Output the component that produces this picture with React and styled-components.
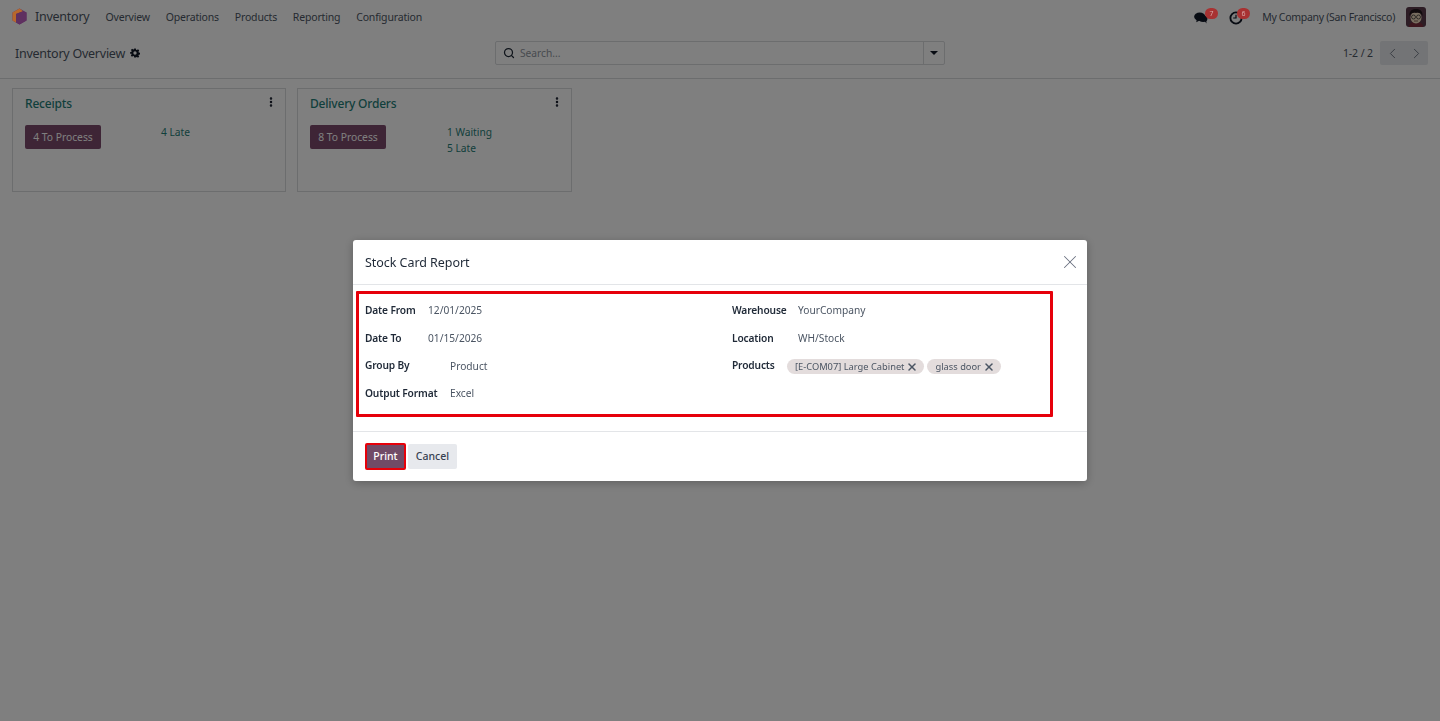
import React from "react";
import styled, { createGlobalStyle } from "styled-components";
import { Search, ChevronLeft, ChevronRight, X, EllipsisVertical } from "lucide-react";

const Global = createGlobalStyle`
  html, body { margin: 0; padding: 0; height: 100%; background: #fff; }
  body { font-family: "Noto Sans", "Open Sans", sans-serif; font-size: 12px; color: #4b5563; overflow: hidden; }
  * { box-sizing: border-box; }
`;

const Page = styled.div`
  width: 1440px;
  height: 721px;
  display: flex;
  flex-direction: column;
  background: #fff;
`;

const NavBar = styled.header`
  height: 35px;
  display: flex;
  align-items: center;
  padding: 0 14px 2px 12px;
`;

const LogoBox = styled.svg`
  position: relative;
  z-index: 1;
  width: 15px;
  height: 17px;
  margin-right: 8px;
  flex: none;
`;

const AppName = styled.span`
  font-size: 12.5px;
  letter-spacing: -0.25px;
  color: #4b5563;
  margin-right: 16px;
`;

const NavItem = styled.span`
  font-size: 10.5px;
  letter-spacing: -0.17px;
  color: #4b5563;
  margin-right: 15.8px;
`;

const NavRight = styled.div`
  margin-left: auto;
  display: flex;
  align-items: center;
`;

const IconWrap = styled.span`
  position: relative;
  display: inline-flex;
  width: 16px;
  height: 16px;
  margin-top: 2px;
  align-items: center;
  justify-content: center;
  margin-right: ${(p) => p.$gap}px;
`;

const Badge = styled.span`
  position: absolute;
  z-index: 1;
  top: -1.5px;
  left: ${(p) => p.$left}px;
  width: 12.5px;
  height: 11px;
  border-radius: 6px;
  background: #a83232;
  color: #d8a8a8;
  font-size: 7px;
  line-height: 11px;
  text-align: center;
`;

const CompanyName = styled.span`
  font-size: 10.5px;
  letter-spacing: -0.3px;
  color: #4b5563;
  margin-right: 11px;
`;

const Avatar = styled.svg`
  width: 20px;
  height: 20px;
  border-radius: 3px;
  flex: none;
`;

const ControlPanel = styled.div`
  height: 44px;
  display: grid;
  grid-template-columns: 480px 450px 1fr;
  align-items: center;
  padding: 0 12px 7px 15px;
  border-bottom: 1px solid #d8dadd;
`;

const TitleRow = styled.div`
  display: flex;
  align-items: center;
  gap: 5px;
`;

const PageTitle = styled.span`
  font-size: 12.5px;
  letter-spacing: -0.25px;
  color: #4b5563;
`;

const SearchBar = styled.div`
  height: 24px;
  display: flex;
  align-items: center;
  border: 1px solid #d8dadd;
  border-radius: 2px;
`;

const SearchField = styled.div`
  flex: 1;
  display: flex;
  align-items: center;
  gap: 5px;
  padding-left: 7px;
  height: 100%;
  font-size: 10.2px;
  color: #8f959e;
`;

const SearchCaret = styled.div`
  width: 21px;
  height: 100%;
  border-left: 1px solid #d8dadd;
  display: flex;
  align-items: center;
  justify-content: center;
`;

const Caret = styled.span`
  width: 0;
  height: 0;
  border-left: 4px solid transparent;
  border-right: 4px solid transparent;
  border-top: 4px solid #111827;
`;

const Pager = styled.div`
  display: flex;
  align-items: center;
  justify-content: flex-end;
  gap: 7px;
  font-size: 10.5px;
  letter-spacing: -0.1px;
`;

const PagerButtons = styled.div`
  width: 48px;
  height: 24px;
  background: #e7e9ed;
  border-radius: 2px;
  display: flex;
  align-items: center;
  justify-content: space-around;
  color: #6b7280;
`;

const Dashboard = styled.main`
  display: flex;
  gap: 11px;
  padding: 9px 12px;
`;

const Card = styled.section`
  width: ${(p) => p.$w}px;
  height: 104px;
  border: 1px solid #d8dadd;
  padding: 6px 12px;
  display: flex;
  flex-direction: column;
`;

const CardHead = styled.div`
  display: flex;
  justify-content: space-between;
  align-items: flex-start;
  height: 30px;
`;

const CardTitle = styled.span`
  font-size: 12px;
  letter-spacing: -0.2px;
  font-weight: 500;
  color: #1f8078;
  line-height: 18px;
`;

const CardMore = styled.span`
  margin-right: -4px;
  margin-top: 1px;
  color: #111827;
  display: inline-flex;
`;

const CardBody = styled.div`
  display: flex;
  align-items: flex-start;
`;

const ProcessButton = styled.div`
  width: 76px;
  height: 24px;
  background: #7c4a6c;
  color: #fff;
  font-size: 10.3px;
  line-height: 24px;
  text-align: center;
  border-radius: 2px;
`;

const CardStats = styled.div`
  margin-left: ${(p) => p.$left}px;
  margin-top: -1px;
  display: flex;
  flex-direction: column;
  font-size: 10.2px;
  line-height: 16px;
  color: #1f8078;
`;

const Backdrop = styled.div`
  position: fixed;
  inset: 0;
  background: rgba(0, 0, 0, 0.5);
  padding-top: 240px;
  display: flex;
  justify-content: center;
  align-items: flex-start;
`;

const Modal = styled.div`
  position: relative;
  z-index: 2;
  width: 734px;
  height: 241px;
  background: #fff;
  border-radius: 3px;
  box-shadow: 0 2px 10px rgba(0, 0, 0, 0.25);
  display: flex;
  flex-direction: column;
`;

const ModalHead = styled.div`
  height: 45px;
  padding: 0 6px 0 12px;
  border-bottom: 1px solid #e3e5e8;
  display: flex;
  align-items: center;
  justify-content: space-between;
`;

const ModalTitle = styled.span`
  font-size: 12.5px;
  letter-spacing: -0.05px;
  color: #1f2937;
`;

const CloseIcon = styled.span`
  display: inline-flex;
  color: #6b7280;
`;

const ModalBody = styled.div`
  flex: 1;
  padding: 6px 0 0 3px;
  border-bottom: 1px solid #e3e5e8;
`;

const Highlight = styled.div`
  width: 697px;
  height: 126px;
  border: 3px solid #e6000a;
  border-radius: 1px;
  padding: 2px 6px 0;
  display: flex;
`;

const FormColumn = styled.div`
  width: ${(p) => p.$w}px;
  display: flex;
  flex-direction: column;
`;

const FormRow = styled.div`
  height: 27.7px;
  display: flex;
  align-items: center;
`;

const FieldLabel = styled.span`
  width: ${(p) => p.$w}px;
  flex: none;
  font-size: 10.2px;
  letter-spacing: -0.15px;
  font-weight: 600;
  color: #1f2937;
`;

const FieldValue = styled.span`
  font-size: 10.2px;
  color: #4b5563;
  padding-top: 1px;
`;

const Tags = styled.div`
  display: flex;
  gap: 3px;
  margin-top: 3px;
`;

const Tag = styled.span`
  display: inline-flex;
  align-items: center;
  gap: 2px;
  height: 15px;
  padding: 0 6px 0 8px;
  border-radius: 8px;
  background: #e3dcdc;
  font-size: 9.3px;
  color: #4b5563;
`;

const ModalFoot = styled.div`
  height: 49px;
  display: flex;
  align-items: center;
  padding: 0 0 0 12px;
  gap: 2px;
`;

const PrintButton = styled.div`
  width: 41px;
  height: 27px;
  background: #714b67;
  border: 2px solid #e6000a;
  border-radius: 2px;
  color: #fff;
  font-size: 10.5px;
  font-weight: 500;
  padding-bottom: 1px;
  display: flex;
  align-items: center;
  justify-content: center;
`;

const CancelButton = styled.div`
  width: 49px;
  height: 25px;
  background: #e7e9ed;
  border-radius: 2px;
  color: #374151;
  font-size: 10.5px;
  font-weight: 500;
  padding-bottom: 1px;
  display: flex;
  align-items: center;
  justify-content: center;
`;

const Logo = () => (
  <LogoBox viewBox="0 0 15 17">
    <path d="M7.5 0.5 L14.5 4.5 V12.5 L7.5 16.5 L0.5 12.5 V4.5 Z" fill="#5f3060" />
    <path d="M7.5 0.5 L0.5 4.5 V12.5 L4 14.500 V6 L11 3.300 Z" fill="#b8682c" />
    <path d="M4 6 L11 3.300 L14.5 4.5 V12.5 L7.5 16.5 L4 14.500 Z" fill="#5f3060" />
  </LogoBox>
);

const Gear = () => (
  <svg width="10" height="10" viewBox="0 0 24 24" fill="#111827">
    <path d="M10 1h4l.6 3.2 2 .8 2.7-1.8 2.8 2.8-1.8 2.7.8 2 3.2.6v4l-3.2.6-.8 2 1.800 2.700-2.800 2.800-2.700-1.800-2 .8L14 23h-4l-.6-3.200-2-.8-2.700 1.800-2.800-2.800 1.800-2.700-.8-2L0 14v-4l3.200-.6.8-2L2.200 4.700 5 1.900l2.700 1.800 2-.8Z M12 8a4 4 0 1 0 0 8 4 4 0 0 0 0-8Z" fillRule="evenodd" />
  </svg>
);

const Chat = () => (
  <svg width="14" height="12" viewBox="0 0 16 14" fill="#111827">
    <ellipse cx="6.500" cy="5.500" rx="6.500" ry="4.800" />
    <path d="M3 8.500 L2.500 12 L7 9.500Z" />
    <ellipse cx="10.500" cy="8" rx="5" ry="3.800" />
    <path d="M12 10.500 L14.500 13.500 L14 9.500Z" />
  </svg>
);

const Clock = () => (
  <svg width="14" height="14" viewBox="0 0 15 15" fill="none" stroke="#111827">
    <circle cx="7.500" cy="7.500" r="6" strokeWidth="2" />
    <path d="M7.500 4 V7.500 H4.500" strokeWidth="1.300" />
  </svg>
);

const AvatarArt = () => (
  <Avatar viewBox="0 0 20 20">
    <rect width="20" height="20" fill="#5a3a4a" />
    <path d="M3 20 C3 16 6 15 10 15 S17 16 17 20Z" fill="#7c2d3c" />
    <ellipse cx="10" cy="10.500" rx="5.500" ry="6" fill="#f0dcc0" />
    <path d="M3.500 9 C3 3 7 2 10 2 S17 3 16.500 9 C15 6 13 5.500 10 6 C7 5.500 5 6 3.500 9Z" fill="#20161a" />
    <circle cx="7.500" cy="10" r="2" fill="none" stroke="#222" strokeWidth="0.700" />
    <circle cx="12.500" cy="10" r="2" fill="none" stroke="#222" strokeWidth="0.700" />
    <path d="M8 14 H12" stroke="#6d4c41" strokeWidth="0.800" />
  </Avatar>
);

export default function App() {
  return (
    <>
      <Global />
      <Page>
        <NavBar>
          <Logo />
          <AppName>Inventory</AppName>
          <NavItem>Overview</NavItem>
          <NavItem>Operations</NavItem>
          <NavItem>Products</NavItem>
          <NavItem>Reporting</NavItem>
          <NavItem>Configuration</NavItem>
          <NavRight>
            <IconWrap $gap={18.5}>
              <Chat />
              <Badge $left={12}>7</Badge>
            </IconWrap>
            <IconWrap $gap={18.5}>
              <Clock />
              <Badge $left={9.5}>6</Badge>
            </IconWrap>
            <CompanyName>My Company (San Francisco)</CompanyName>
            <AvatarArt />
          </NavRight>
        </NavBar>
        <ControlPanel>
          <TitleRow>
            <PageTitle>Inventory Overview</PageTitle>
            <Gear />
          </TitleRow>
          <SearchBar>
            <SearchField>
              <Search size={12} color="#1f2937" strokeWidth={2.500} />
              Search...
            </SearchField>
            <SearchCaret>
              <Caret />
            </SearchCaret>
          </SearchBar>
          <Pager>
            1-2 / 2
            <PagerButtons>
              <ChevronLeft size={17} strokeWidth={1.300} />
              <ChevronRight size={17} strokeWidth={1.300} />
            </PagerButtons>
          </Pager>
        </ControlPanel>
        <Dashboard>
          <Card $w={274}>
            <CardHead>
              <CardTitle>Receipts</CardTitle>
              <CardMore><EllipsisVertical size={12} strokeWidth={3} /></CardMore>
            </CardHead>
            <CardBody>
              <ProcessButton>4 To Process</ProcessButton>
              <CardStats $left={60}><span>4 Late</span></CardStats>
            </CardBody>
          </Card>
          <Card $w={275}>
            <CardHead>
              <CardTitle>Delivery Orders</CardTitle>
              <CardMore><EllipsisVertical size={12} strokeWidth={3} /></CardMore>
            </CardHead>
            <CardBody>
              <ProcessButton>8 To Process</ProcessButton>
              <CardStats $left={61}><span>1 Waiting</span><span>5 Late</span></CardStats>
            </CardBody>
          </Card>
        </Dashboard>
      </Page>
      <Backdrop>
        <Modal>
          <ModalHead>
            <ModalTitle>Stock Card Report</ModalTitle>
            <CloseIcon><X size={22} strokeWidth={1.100} /></CloseIcon>
          </ModalHead>
          <ModalBody>
            <Highlight>
              <FormColumn $w={367}>
                <FormRow><FieldLabel $w={63}>Date From</FieldLabel><FieldValue>12/01/2025</FieldValue></FormRow>
                <FormRow><FieldLabel $w={63}>Date To</FieldLabel><FieldValue>01/15/2026</FieldValue></FormRow>
                <FormRow><FieldLabel $w={85}>Group By</FieldLabel><FieldValue>Product</FieldValue></FormRow>
                <FormRow><FieldLabel $w={85}>Output Format</FieldLabel><FieldValue>Excel</FieldValue></FormRow>
              </FormColumn>
              <FormColumn $w={310}>
                <FormRow><FieldLabel $w={66}>Warehouse</FieldLabel><FieldValue>YourCompany</FieldValue></FormRow>
                <FormRow><FieldLabel $w={66}>Location</FieldLabel><FieldValue>WH/Stock</FieldValue></FormRow>
                <FormRow>
                  <FieldLabel $w={55}>Products</FieldLabel>
                  <Tags>
                    <Tag>[E-COM07] Large Cabinet <X size={12} strokeWidth={3} /></Tag>
                    <Tag>glass door <X size={12} strokeWidth={3} /></Tag>
                  </Tags>
                </FormRow>
              </FormColumn>
            </Highlight>
          </ModalBody>
          <ModalFoot>
            <PrintButton>Print</PrintButton>
            <CancelButton>Cancel</CancelButton>
          </ModalFoot>
        </Modal>
      </Backdrop>
    </>
  );
}
